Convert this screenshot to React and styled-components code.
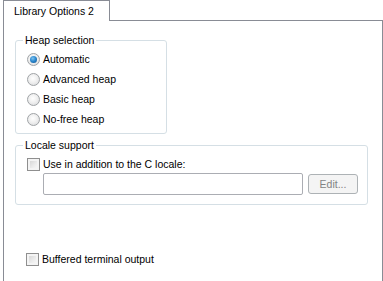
import React from 'react';
import styled, { createGlobalStyle } from 'styled-components';

const GlobalStyle = createGlobalStyle`
  html, body {
    margin: 0;
    padding: 0;
    background: #ffffff;
  }
  body {
    font-family: "Liberation Sans", Arial, sans-serif;
    font-size: 10.5px;
    color: #000;
  }
`;

const Window = styled.div`
  width: 383px;
  height: 281px;
  overflow: hidden;
  background: #ffffff;
`;

const TabStrip = styled.div`
  display: flex;
  padding-left: 3px;
  height: 20px;
`;

const Tab = styled.div`
  width: 107px;
  height: 21px;
  border: 1px solid #898c95;
  border-bottom: none;
  background: #fff;
  padding-left: 10px;
  box-sizing: border-box;
  line-height: 20px;
  position: relative;
  z-index: 1;
`;

const Panel = styled.div`
  margin-left: 3px;
  width: 380px;
  height: 270px;
  box-sizing: border-box;
  border: 1px solid #898c95;
  border-bottom: none;
  padding: 13px 14px 0 11px;
`;

const Group = styled.fieldset`
  margin: ${p => p.$top || 0}px 0 0 0;
  padding: 0 0 ${p => p.$bottom || 0}px 0;
  width: ${p => p.$width}px;
  box-sizing: border-box;
  border: 1px solid #d5dfe5;
  border-radius: 3px;
  min-width: 0;
`;

const Legend = styled.legend`
  margin-left: 7px;
  padding: 0 2px;
  line-height: 13px;
  height: 13px;
`;

const OptionList = styled.div`
  display: flex;
  flex-direction: column;
  padding: 2px 0 0 11px;
`;

const Row = styled.label`
  display: flex;
  align-items: center;
  gap: 3px;
  height: ${p => p.$h || 20}px;
`;

const Radio = styled.span`
  width: 13px;
  height: 13px;
  box-sizing: border-box;
  border-radius: 50%;
  border: 1px solid #a0a3a6;
  background: radial-gradient(circle at 45% 40%, #ffffff 0%, #f0f0f0 45%, #d4d6d8 100%);
  display: flex;
  align-items: center;
  justify-content: center;
  flex-shrink: 0;

  &::after {
    content: '';
    display: ${p => (p.$checked ? 'block' : 'none')};
    width: 7px;
    height: 7px;
    border-radius: 50%;
    background: radial-gradient(circle at 40% 35%, #7fc4f0 0%, #2e8ad0 45%, #0b4f8c 100%);
  }
`;

const Check = styled.span`
  width: 13px;
  height: 13px;
  box-sizing: border-box;
  border: 1px solid #8f8f8f;
  background: #f4f4f4;
  padding: 2px;
  flex-shrink: 0;

  &::after {
    content: '';
    display: block;
    width: 100%;
    height: 100%;
    background: linear-gradient(135deg, #d8d8d8 0%, #ececec 60%, #f6f6f6 100%);
  }
`;

const Label = styled.span`
  line-height: 13px;
  white-space: nowrap;
`;

const LocaleBody = styled.div`
  display: flex;
  flex-direction: column;
  padding: 3px 0 0 11px;
`;

const EditRow = styled.div`
  display: flex;
  align-items: center;
  gap: 5px;
  padding-left: 16px;
`;

const TextBox = styled.div`
  width: 260px;
  height: 22px;
  box-sizing: border-box;
  border: 1px solid #abadb3;
  border-radius: 2px;
  background: #fff;
`;

const Button = styled.div`
  width: 50px;
  height: 20px;
  box-sizing: border-box;
  border: 1px solid #adb2b5;
  border-radius: 3px;
  background: #f4f4f4;
  color: #838383;
  display: flex;
  align-items: center;
  justify-content: center;
`;

const Footer = styled.div`
  padding: 44px 0 0 11px;
`;

const heapOptions = ['Automatic', 'Advanced heap', 'Basic heap', 'No-free heap'];

export default function App() {
  return (
    <Window>
      <GlobalStyle />
      <TabStrip>
        <Tab>Library Options 2</Tab>
      </TabStrip>
      <Panel>
        <Group $width={152} $bottom={4}>
          <Legend>Heap selection</Legend>
          <OptionList>
            {heapOptions.map((opt, i) => (
              <Row key={opt}>
                <Radio $checked={i === 0} />
                <Label>{opt}</Label>
              </Row>
            ))}
          </OptionList>
        </Group>
        <Group $width={353} $top={5} $bottom={9}>
          <Legend>Locale support</Legend>
          <LocaleBody>
            <Row $h={18}>
              <Check />
              <Label>Use in addition to the C locale:</Label>
            </Row>
            <EditRow>
              <TextBox />
              <Button>Edit...</Button>
            </EditRow>
          </LocaleBody>
        </Group>
        <Footer>
          <Row>
            <Check />
            <Label>Buffered terminal output</Label>
          </Row>
        </Footer>
      </Panel>
    </Window>
  );
}
